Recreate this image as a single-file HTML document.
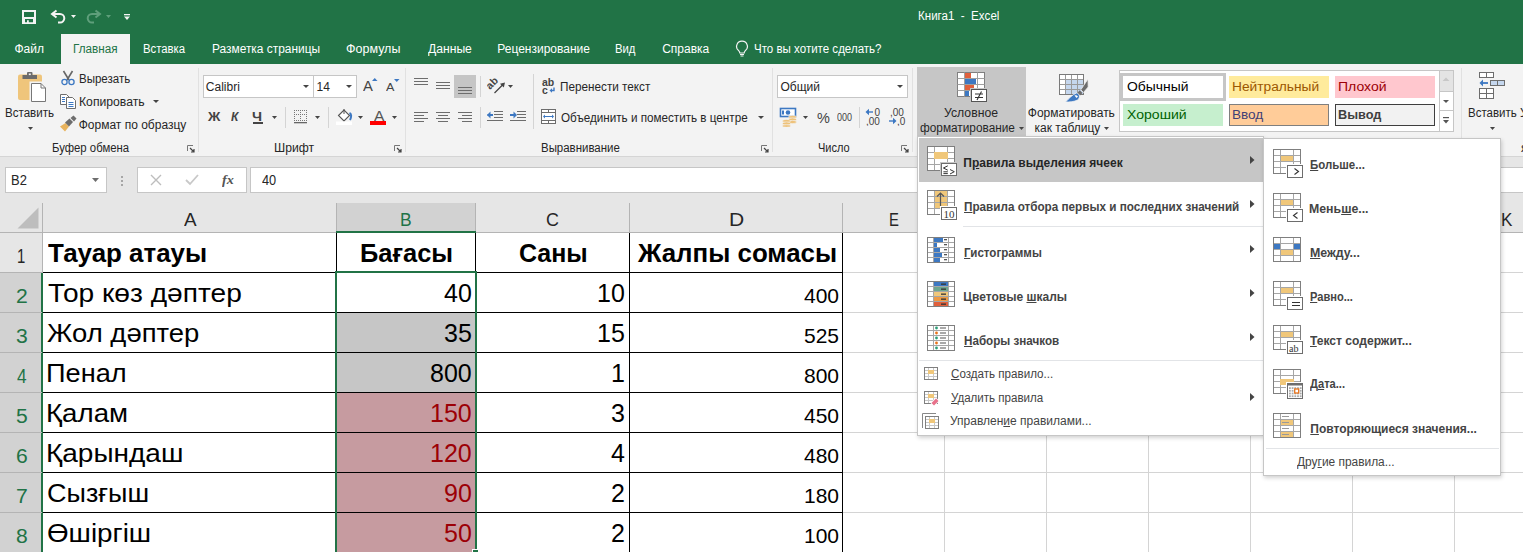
<!DOCTYPE html>
<html><head><meta charset="utf-8"><style>
html,body{margin:0;padding:0;}
body{width:1523px;height:552px;overflow:hidden;position:relative;background:#fff;font-family:'Liberation Sans', sans-serif;}
div,span,svg{position:absolute;}
</style></head><body>
<div style="left:0px;top:0px;width:1523px;height:64px;background:#217346;"></div><div style="left:61px;top:34px;width:69px;height:30px;background:#f3f3f3;"></div><div style="left:0px;top:64px;width:1523px;height:92px;background:#f3f3f3;"></div><div style="left:0px;top:156px;width:1523px;height:1px;background:#d5d5d5;"></div><div style="left:198px;top:68px;width:1px;height:84px;background:#e1e1e1;"></div><div style="left:405px;top:68px;width:1px;height:84px;background:#e1e1e1;"></div><div style="left:772px;top:68px;width:1px;height:84px;background:#e1e1e1;"></div><div style="left:912px;top:68px;width:1px;height:84px;background:#e1e1e1;"></div><div style="left:1461px;top:68px;width:1px;height:84px;background:#e1e1e1;"></div><div style="left:203px;top:75px;width:109px;height:21px;border:1px solid #c6c6c6;background:#ffffff;"></div><div style="left:313px;top:75px;width:42px;height:21px;border:1px solid #c6c6c6;background:#ffffff;"></div><div style="left:285px;top:107px;width:1px;height:21px;background:#d4d4d4;"></div><div style="left:328px;top:107px;width:1px;height:21px;background:#d4d4d4;"></div><div style="left:454px;top:75px;width:22px;height:23px;background:#c5c5c5;"></div><div style="left:480px;top:76px;width:1px;height:21px;background:#d4d4d4;"></div><div style="left:480px;top:107px;width:1px;height:21px;background:#d4d4d4;"></div><div style="left:533px;top:74px;width:1px;height:55px;background:#d4d4d4;"></div><div style="left:777px;top:75px;width:129px;height:21px;border:1px solid #c6c6c6;background:#ffffff;"></div><div style="left:859px;top:107px;width:1px;height:21px;background:#d4d4d4;"></div><div style="left:917px;top:67px;width:109px;height:70px;background:#c6c6c6;"></div><div style="left:1119px;top:70px;width:333px;height:60px;border:1px solid #c6c6c6;background:#ffffff;"></div><div style="left:1120px;top:73px;width:104px;height:26px;border:1px solid #c6c6c6;background:#ffffff;border-width:3px;width:100px;height:22px;"></div><div style="left:1229px;top:76px;width:100px;height:22px;background:#ffeb9c;"></div><div style="left:1335px;top:76px;width:100px;height:22px;background:#ffc7ce;"></div><div style="left:1123px;top:104px;width:100px;height:22px;background:#c6efce;"></div><div style="left:1229px;top:104px;width:98px;height:20px;border:1px solid #7f7f7f;background:#ffcc99;"></div><div style="left:1335px;top:104px;width:98px;height:20px;border:1px solid #3f3f3f;background:#f2f2f2;"></div><div style="left:1439px;top:71px;width:1px;height:60px;background:#c6c6c6;"></div><div style="left:1440px;top:71px;width:13px;height:20px;background:#e4e4e4;"></div><div style="left:1440px;top:91px;width:13px;height:1px;background:#c6c6c6;"></div><div style="left:1440px;top:110px;width:13px;height:1px;background:#c6c6c6;"></div><div style="left:0px;top:157px;width:1523px;height:46px;background:#e6e6e6;"></div><div style="left:5px;top:167px;width:100px;height:24px;border:1px solid #c6c6c6;background:#ffffff;"></div><div style="left:137px;top:167px;width:108px;height:24px;border:1px solid #c6c6c6;background:#ffffff;"></div><div style="left:250px;top:167px;width:1276px;height:24px;border:1px solid #c6c6c6;background:#ffffff;"></div><div style="left:0px;top:233px;width:1523px;height:319px;background:#ffffff;"></div><div style="left:0px;top:203px;width:1523px;height:30px;background:#e6e6e6;"></div><div style="left:336px;top:203px;width:139px;height:30px;background:#d2d2d2;"></div><div style="left:0px;top:232px;width:1523px;height:1px;background:#b4b4b4;"></div><div style="left:42px;top:203px;width:1px;height:30px;background:#b4b4b4;"></div><div style="left:336px;top:203px;width:1px;height:30px;background:#b4b4b4;"></div><div style="left:475px;top:203px;width:1px;height:30px;background:#b4b4b4;"></div><div style="left:629px;top:203px;width:1px;height:30px;background:#b4b4b4;"></div><div style="left:842px;top:203px;width:1px;height:30px;background:#b4b4b4;"></div><div style="left:944px;top:203px;width:1px;height:30px;background:#b4b4b4;"></div><div style="left:1046px;top:203px;width:1px;height:30px;background:#b4b4b4;"></div><div style="left:1148px;top:203px;width:1px;height:30px;background:#b4b4b4;"></div><div style="left:1250px;top:203px;width:1px;height:30px;background:#b4b4b4;"></div><div style="left:1352px;top:203px;width:1px;height:30px;background:#b4b4b4;"></div><div style="left:1454px;top:203px;width:1px;height:30px;background:#b4b4b4;"></div><div style="left:336px;top:231px;width:140px;height:2px;background:#217346;"></div><div style="left:0px;top:233px;width:42px;height:319px;background:#d2d2d2;"></div><div style="left:0px;top:233px;width:42px;height:39px;background:#e6e6e6;"></div><div style="left:42px;top:203px;width:1px;height:70px;background:#b4b4b4;"></div><div style="left:41px;top:273px;width:2px;height:279px;background:#217346;"></div><div style="left:0px;top:272px;width:42px;height:1px;background:#b4b4b4;"></div><div style="left:0px;top:312px;width:42px;height:1px;background:#b4b4b4;"></div><div style="left:0px;top:352px;width:42px;height:1px;background:#b4b4b4;"></div><div style="left:0px;top:392px;width:42px;height:1px;background:#b4b4b4;"></div><div style="left:0px;top:432px;width:42px;height:1px;background:#b4b4b4;"></div><div style="left:0px;top:472px;width:42px;height:1px;background:#b4b4b4;"></div><div style="left:0px;top:512px;width:42px;height:1px;background:#b4b4b4;"></div><div style="left:0px;top:552px;width:42px;height:1px;background:#b4b4b4;"></div><div style="left:842px;top:233px;width:1px;height:319px;background:#d4d4d4;"></div><div style="left:944px;top:233px;width:1px;height:319px;background:#d4d4d4;"></div><div style="left:1046px;top:233px;width:1px;height:319px;background:#d4d4d4;"></div><div style="left:1148px;top:233px;width:1px;height:319px;background:#d4d4d4;"></div><div style="left:1250px;top:233px;width:1px;height:319px;background:#d4d4d4;"></div><div style="left:1352px;top:233px;width:1px;height:319px;background:#d4d4d4;"></div><div style="left:1454px;top:233px;width:1px;height:319px;background:#d4d4d4;"></div><div style="left:1556px;top:233px;width:1px;height:319px;background:#d4d4d4;"></div><div style="left:842px;top:272px;width:681px;height:1px;background:#d4d4d4;"></div><div style="left:842px;top:312px;width:681px;height:1px;background:#d4d4d4;"></div><div style="left:842px;top:352px;width:681px;height:1px;background:#d4d4d4;"></div><div style="left:842px;top:392px;width:681px;height:1px;background:#d4d4d4;"></div><div style="left:842px;top:432px;width:681px;height:1px;background:#d4d4d4;"></div><div style="left:842px;top:472px;width:681px;height:1px;background:#d4d4d4;"></div><div style="left:842px;top:512px;width:681px;height:1px;background:#d4d4d4;"></div><div style="left:842px;top:552px;width:681px;height:1px;background:#d4d4d4;"></div><div style="left:336px;top:313px;width:139px;height:79px;background:#c6c6c6;"></div><div style="left:336px;top:393px;width:139px;height:159px;background:#c69ba0;"></div><div style="left:336px;top:233px;width:1px;height:319px;background:#000000;"></div><div style="left:475px;top:233px;width:1px;height:319px;background:#000000;"></div><div style="left:629px;top:233px;width:1px;height:319px;background:#000000;"></div><div style="left:842px;top:233px;width:1px;height:319px;background:#000000;"></div><div style="left:42px;top:233px;width:1px;height:1px;background:transparent;"></div><div style="left:43px;top:272px;width:800px;height:1px;background:#000000;"></div><div style="left:43px;top:312px;width:800px;height:1px;background:#000000;"></div><div style="left:43px;top:352px;width:800px;height:1px;background:#000000;"></div><div style="left:43px;top:392px;width:800px;height:1px;background:#000000;"></div><div style="left:43px;top:432px;width:800px;height:1px;background:#000000;"></div><div style="left:43px;top:472px;width:800px;height:1px;background:#000000;"></div><div style="left:43px;top:512px;width:800px;height:1px;background:#000000;"></div><div style="left:43px;top:552px;width:800px;height:1px;background:#000000;"></div><div style="left:335px;top:271px;width:142px;height:2px;background:#217346;"></div><div style="left:335px;top:271px;width:2px;height:281px;background:#217346;"></div><div style="left:475px;top:271px;width:2px;height:278px;background:#217346;"></div><div style="left:472px;top:549px;width:7px;height:3px;background:#ffffff;"></div><div style="left:473px;top:550px;width:5px;height:2px;background:#217346;"></div><div style="left:917px;top:136px;width:347px;height:300px;background:#ffffff;box-sizing:border-box;border:1px solid #c6c6c6;box-shadow:1px 2px 4px rgba(0,0,0,0.18);"></div><div style="left:919px;top:138px;width:344px;height:44px;background:#c6c6c6;"></div><div style="left:963px;top:226px;width:300px;height:1px;background:#e2e4e7;"></div><div style="left:919px;top:360px;width:344px;height:1px;background:#e2e4e7;"></div><div style="left:1263px;top:138px;width:238px;height:338px;background:#ffffff;box-sizing:border-box;border:1px solid #c6c6c6;box-shadow:1px 2px 4px rgba(0,0,0,0.18);"></div><div style="left:1266px;top:448px;width:233px;height:1px;background:#e2e4e7;"></div><div style="left:253px;top:122px;width:10px;height:1.5px;background:#444;"></div><div style="left:370px;top:121px;width:16px;height:4px;background:#ff0000;"></div><div style="left:121px;top:176px;width:2px;height:2px;background:#a6a6a6;"></div><div style="left:121px;top:180px;width:2px;height:2px;background:#a6a6a6;"></div><div style="left:121px;top:184px;width:2px;height:2px;background:#a6a6a6;"></div>
<svg style="left:22px;top:10px;" width="14" height="14" viewBox="0 0 14 14"><path fill-rule="evenodd" fill="#f4f4f4" d="M0 0H14V14H0Z M2 2V7H12V2Z M3 9V12.3H5V10.3H6.8V12.3H11V9Z"/></svg><svg style="left:50px;top:9px;" width="18" height="16" viewBox="0 0 18 16"><path d="M6.5 1.5L2 5L6.5 8.5" fill="none" stroke="#f4f4f4" stroke-width="2"/><path d="M2.5 5H10A4.3 4.3 0 0 1 10 13.6H8" fill="none" stroke="#f4f4f4" stroke-width="2"/></svg><svg style="left:71px;top:15px;" width="5" height="3" viewBox="0 0 5 3"><path d="M0 0H5L2.5 3Z" fill="#f4f4f4"/></svg><svg style="left:84px;top:9px;" width="18" height="16" viewBox="0 0 18 16"><path d="M11.5 1.5L16 5L11.5 8.5" fill="none" stroke="#5f9f7b" stroke-width="2"/><path d="M15.5 5H8A4.3 4.3 0 0 0 8 13.6H10" fill="none" stroke="#5f9f7b" stroke-width="2"/></svg><svg style="left:106px;top:15px;" width="5" height="3" viewBox="0 0 5 3"><path d="M0 0H5L2.5 3Z" fill="#5f9f7b"/></svg><svg style="left:124px;top:13px;" width="6" height="8" viewBox="0 0 6 8"><rect x="0" y="1" width="6" height="1.3" fill="#f4f4f4"/><path d="M0 3.5H6L3 7Z" fill="#f4f4f4"/></svg><svg style="left:735px;top:40px;" width="14" height="17" viewBox="0 0 14 17"><path d="M7 1.2A5.3 5.3 0 0 0 3.8 10.8C4.6 11.6 4.8 12.3 4.8 13H9.2C9.2 12.3 9.4 11.6 10.2 10.8A5.3 5.3 0 0 0 7 1.2Z" fill="none" stroke="#f4f4f4" stroke-width="1.2"/><path d="M5 14.5H9M5.5 16H8.5" stroke="#f4f4f4" stroke-width="1.1"/></svg><svg style="left:17px;top:71px;" width="31" height="32" viewBox="0 0 31 32"><rect x="1" y="3.5" width="24" height="25.5" rx="2" fill="#efc57b"/><rect x="5.5" y="4" width="14.5" height="4" fill="#6b6b6b"/><rect x="10" y="1" width="5.5" height="4" rx="1" fill="#6b6b6b"/><rect x="11.8" y="2.5" width="2" height="1.6" fill="#f3f3f3"/><path d="M13.5 11.5H24.5L29.5 16.5V31.5H13.5Z" fill="#ffffff" stroke="#f3f3f3" stroke-width="2"/><path d="M14.5 12.5H24L28.5 17V30.5H14.5Z M24 12.5V17H28.5" fill="#ffffff" stroke="#777" stroke-width="1"/></svg><svg style="left:28px;top:127px;" width="5" height="3" viewBox="0 0 5 3"><path d="M0 0H5L2.5 3Z" fill="#444444"/></svg><svg style="left:60px;top:70px;" width="16" height="16" viewBox="0 0 16 16"><path d="M3.5 1L9 10M12.5 1L7 10" stroke="#666" stroke-width="1.6"/><circle cx="4.5" cy="12" r="2.6" fill="none" stroke="#3d78c2" stroke-width="1.3"/><circle cx="11.5" cy="12" r="2.6" fill="none" stroke="#3d78c2" stroke-width="1.3"/></svg><svg style="left:59px;top:93px;" width="18" height="16" viewBox="0 0 18 16"><path d="M1.5 1.5H7.5L10.5 4.5V11.5H1.5Z" fill="#fff" stroke="#6d6d6d"/><path d="M3 4.5H6M3 6.5H6M3 8.5H6" stroke="#3d78c2"/><path d="M7.5 4.5H13.5L16.5 7.5V15.5H7.5Z" fill="#fff" stroke="#6d6d6d"/><path d="M9.5 9.5H14.5M9.5 11.5H14.5M9.5 13.5H14.5" stroke="#3d78c2"/></svg><svg style="left:153px;top:100px;" width="6" height="3" viewBox="0 0 6 3"><path d="M0 0H6L3.0 3Z" fill="#444444"/></svg><svg style="left:59px;top:115px;" width="19" height="17" viewBox="0 0 19 17"><path d="M1 11.5L6.5 8L10 11.5L6 16.5Z" fill="#e8b35d"/><path d="M6 7.5L10.5 3.5L14 7L10 11.5Z" fill="#6d6d6d"/><path d="M11.5 3L14.5 0.5L17.5 3.5L15 6.5Z" fill="#6d6d6d"/></svg><svg style="left:187px;top:145px;" width="8" height="8" viewBox="0 0 8 8"><path d="M0.5 6V0.5H6" fill="none" stroke="#777"/><path d="M3 3L7 7M7 4V7H4" fill="none" stroke="#444" stroke-width="1.2"/></svg><svg style="left:394px;top:145px;" width="8" height="8" viewBox="0 0 8 8"><path d="M0.5 6V0.5H6" fill="none" stroke="#777"/><path d="M3 3L7 7M7 4V7H4" fill="none" stroke="#444" stroke-width="1.2"/></svg><svg style="left:761px;top:145px;" width="8" height="8" viewBox="0 0 8 8"><path d="M0.5 6V0.5H6" fill="none" stroke="#777"/><path d="M3 3L7 7M7 4V7H4" fill="none" stroke="#444" stroke-width="1.2"/></svg><svg style="left:901px;top:145px;" width="8" height="8" viewBox="0 0 8 8"><path d="M0.5 6V0.5H6" fill="none" stroke="#777"/><path d="M3 3L7 7M7 4V7H4" fill="none" stroke="#444" stroke-width="1.2"/></svg><svg style="left:303px;top:85px;" width="6" height="3" viewBox="0 0 6 3"><path d="M0 0H6L3.0 3Z" fill="#444444"/></svg><svg style="left:346px;top:85px;" width="6" height="3" viewBox="0 0 6 3"><path d="M0 0H6L3.0 3Z" fill="#444444"/></svg><svg style="left:372px;top:78px;" width="6" height="4" viewBox="0 0 6 4"><path d="M0 3H5.5L2.75 0Z" fill="#3d78c2"/></svg><svg style="left:394px;top:79px;" width="6" height="4" viewBox="0 0 6 4"><path d="M0 0H5.5L2.75 3Z" fill="#3d78c2"/></svg><svg style="left:272px;top:116px;" width="5" height="3" viewBox="0 0 5 3"><path d="M0 0H5L2.5 3Z" fill="#444444"/></svg><svg style="left:294px;top:110px;" width="13" height="14" viewBox="0 0 13 14"><rect x="0" y="0" width="1" height="1" fill="#777"/><rect x="2" y="0" width="1" height="1" fill="#777"/><rect x="4" y="0" width="1" height="1" fill="#777"/><rect x="6" y="0" width="1" height="1" fill="#777"/><rect x="8" y="0" width="1" height="1" fill="#777"/><rect x="10" y="0" width="1" height="1" fill="#777"/><rect x="12" y="0" width="1" height="1" fill="#777"/><rect x="0" y="2" width="1" height="1" fill="#777"/><rect x="6" y="2" width="1" height="1" fill="#777"/><rect x="12" y="2" width="1" height="1" fill="#777"/><rect x="0" y="4" width="1" height="1" fill="#777"/><rect x="2" y="4" width="1" height="1" fill="#777"/><rect x="4" y="4" width="1" height="1" fill="#777"/><rect x="6" y="4" width="1" height="1" fill="#777"/><rect x="8" y="4" width="1" height="1" fill="#777"/><rect x="10" y="4" width="1" height="1" fill="#777"/><rect x="12" y="4" width="1" height="1" fill="#777"/><rect x="0" y="6" width="1" height="1" fill="#777"/><rect x="6" y="6" width="1" height="1" fill="#777"/><rect x="12" y="6" width="1" height="1" fill="#777"/><rect x="0" y="8" width="1" height="1" fill="#777"/><rect x="6" y="8" width="1" height="1" fill="#777"/><rect x="12" y="8" width="1" height="1" fill="#777"/><rect x="0" y="10" width="1" height="1" fill="#777"/><rect x="2" y="10" width="1" height="1" fill="#777"/><rect x="4" y="10" width="1" height="1" fill="#777"/><rect x="6" y="10" width="1" height="1" fill="#777"/><rect x="8" y="10" width="1" height="1" fill="#777"/><rect x="10" y="10" width="1" height="1" fill="#777"/><rect x="12" y="10" width="1" height="1" fill="#777"/><rect x="0" y="12" width="13" height="1.3" fill="#666"/></svg><svg style="left:315px;top:116px;" width="5" height="3" viewBox="0 0 5 3"><path d="M0 0H5L2.5 3Z" fill="#444444"/></svg><svg style="left:336px;top:108px;" width="17" height="18" viewBox="0 0 17 18"><path d="M2.5 7.5L8 2L13.5 7.5L8 13Z" fill="#fff" stroke="#555" stroke-width="1.1"/><path d="M8 1V6" stroke="#555"/><path d="M13.5 5Q16.5 6.5 14 12" fill="none" stroke="#3d78c2" stroke-width="2"/><rect x="0" y="13.5" width="16" height="3.5" fill="#ffffff"/></svg><svg style="left:358px;top:116px;" width="5" height="3" viewBox="0 0 5 3"><path d="M0 0H5L2.5 3Z" fill="#444444"/></svg><svg style="left:392px;top:116px;" width="5" height="3" viewBox="0 0 5 3"><path d="M0 0H5L2.5 3Z" fill="#444444"/></svg><svg style="left:414px;top:78px;" width="16" height="14" viewBox="0 0 16 14"><rect x="0" y="0" width="14" height="1" fill="#6d6d6d"/><rect x="0" y="3" width="14" height="1" fill="#6d6d6d"/><rect x="0" y="6" width="14" height="1" fill="#6d6d6d"/></svg><svg style="left:436px;top:82px;" width="16" height="14" viewBox="0 0 16 14"><rect x="0" y="0" width="14" height="1" fill="#6d6d6d"/><rect x="0" y="3" width="14" height="1" fill="#6d6d6d"/><rect x="0" y="6" width="14" height="1" fill="#6d6d6d"/></svg><svg style="left:458px;top:87px;" width="16" height="14" viewBox="0 0 16 14"><rect x="0" y="0" width="14" height="1" fill="#6d6d6d"/><rect x="0" y="3" width="14" height="1" fill="#6d6d6d"/><rect x="0" y="6" width="14" height="1" fill="#6d6d6d"/></svg><svg style="left:414px;top:112px;" width="16" height="14" viewBox="0 0 16 14"><rect x="0" y="0" width="14" height="1" fill="#6d6d6d"/><rect x="0" y="3" width="10" height="1" fill="#6d6d6d"/><rect x="0" y="6" width="14" height="1" fill="#6d6d6d"/><rect x="0" y="9" width="10" height="1" fill="#6d6d6d"/></svg><svg style="left:436px;top:112px;" width="16" height="14" viewBox="0 0 16 14"><rect x="0" y="0" width="14" height="1" fill="#6d6d6d"/><rect x="2" y="3" width="10" height="1" fill="#6d6d6d"/><rect x="0" y="6" width="14" height="1" fill="#6d6d6d"/><rect x="2" y="9" width="10" height="1" fill="#6d6d6d"/></svg><svg style="left:458px;top:112px;" width="16" height="14" viewBox="0 0 16 14"><rect x="0" y="0" width="14" height="1" fill="#6d6d6d"/><rect x="4" y="3" width="10" height="1" fill="#6d6d6d"/><rect x="0" y="6" width="14" height="1" fill="#6d6d6d"/><rect x="4" y="9" width="10" height="1" fill="#6d6d6d"/></svg><svg style="left:487px;top:76px;" width="28" height="20" viewBox="0 0 28 20"><text x="0" y="0" font-family="Liberation Sans" font-weight="bold" font-size="10.5" fill="#444" transform="translate(3,14) rotate(-45)">ab</text><path d="M7.5 17L16.5 8" stroke="#444" stroke-width="1.3"/><path d="M18 6.5L13 7.7L16.8 11.5Z" fill="#444"/></svg><svg style="left:508px;top:85px;" width="5" height="3" viewBox="0 0 5 3"><path d="M0 0H5L2.5 3Z" fill="#444444"/></svg><svg style="left:487px;top:110px;" width="42" height="14" viewBox="0 0 42 14"><path d="M0.5 5H6" stroke="#3d78c2" stroke-width="2"/><path d="M0 5L3.5 1.5V8.5Z" fill="#3d78c2"/><path d="M7 1.5H16M7 4.5H16M7 7.5H16M0 10.5H16" stroke="#6d6d6d"/><path d="M23 5H28.5" stroke="#3d78c2" stroke-width="2"/><path d="M30 5L26.5 1.5V8.5Z" fill="#3d78c2"/><path d="M30 1.5H39M30 4.5H39M30 7.5H39M23 10.5H39" stroke="#6d6d6d"/></svg><svg style="left:541px;top:76px;" width="18" height="18" viewBox="0 0 18 18"><text x="1" y="10" font-family="Liberation Sans" font-weight="bold" font-size="10.5" fill="#444">ab</text><text x="1" y="17.5" font-family="Liberation Sans" font-weight="bold" font-size="10.5" fill="#444">c</text><path d="M13 11.5V14.5H10" fill="none" stroke="#3d78c2" stroke-width="1.4"/><path d="M8.5 14.5L11 12.3V16.7Z" fill="#3d78c2"/></svg><svg style="left:540px;top:108px;" width="17" height="17" viewBox="0 0 17 17"><rect x="1.5" y="1.5" width="14" height="14" fill="#fff" stroke="#6d6d6d"/><path d="M1.5 4.5H15.5M1.5 12.5H15.5M8.5 1.5V4.5M8.5 12.5V15.5" stroke="#6d6d6d"/><path d="M4 8.5H13" stroke="#3d78c2"/><path d="M3 8.5L5 6.5V10.5ZM14 8.5L12 6.5V10.5Z" fill="#3d78c2"/></svg><svg style="left:758px;top:116px;" width="6" height="3" viewBox="0 0 6 3"><path d="M0 0H6L3.0 3Z" fill="#444444"/></svg><svg style="left:897px;top:85px;" width="6" height="3" viewBox="0 0 6 3"><path d="M0 0H6L3.0 3Z" fill="#444444"/></svg><svg style="left:779px;top:107px;" width="19" height="20" viewBox="0 0 19 20"><rect x="1.5" y="1.5" width="15" height="8" fill="#fff" stroke="#3d78c2" stroke-width="1.6"/><circle cx="9" cy="5.5" r="2.3" fill="#3d78c2"/><rect x="3" y="3.5" width="2" height="4" fill="#3d78c2"/><g fill="#eec27a" stroke="#f3f3f3" stroke-width="0.6"><ellipse cx="13.5" cy="10" rx="4" ry="1.6"/><ellipse cx="13.5" cy="12.5" rx="4" ry="1.6"/><ellipse cx="13.5" cy="15" rx="4" ry="1.6"/><ellipse cx="7.5" cy="14" rx="4" ry="1.6"/><ellipse cx="7.5" cy="16.5" rx="4" ry="1.6"/><ellipse cx="7.5" cy="19" rx="4" ry="1.3"/></g></svg><svg style="left:803px;top:116px;" width="5" height="3" viewBox="0 0 5 3"><path d="M0 0H5L2.5 3Z" fill="#444444"/></svg><svg style="left:865px;top:107px;" width="19" height="19" viewBox="0 0 19 19"><path d="M2 5H8" stroke="#3d78c2" stroke-width="1.4"/><path d="M0.5 5L4 1.8V8.2Z" fill="#3d78c2"/><text x="9.5" y="9" font-family="Liberation Sans" font-size="10" fill="#444">0</text><text x="1" y="17.5" font-family="Liberation Sans" font-size="10" fill="#444">,00</text></svg><svg style="left:888px;top:107px;" width="19" height="19" viewBox="0 0 19 19"><text x="2" y="9" font-family="Liberation Sans" font-size="10" fill="#444">,00</text><path d="M1 14H7" stroke="#3d78c2" stroke-width="1.4"/><path d="M8.5 14L5 10.8V17.2Z" fill="#3d78c2"/><text x="9" y="17.5" font-family="Liberation Sans" font-size="10" fill="#444">,0</text></svg><svg style="left:956px;top:71px;" width="32" height="32" viewBox="0 0 32 32"><rect x="1.5" y="1.5" width="27" height="24" fill="#fff" stroke="#808080"/><path d="M8.5 1.5V25.5M21.5 1.5V25.5M1.5 7.5H28.5M1.5 13.5H28.5M1.5 19.5H28.5" stroke="#a0a0a0"/><rect x="9" y="2" width="6" height="5" fill="#e0603c"/><rect x="9" y="8" width="11" height="5" fill="#3d78c2"/><rect x="9" y="14" width="9" height="5" fill="#e0603c"/><rect x="9" y="20" width="4" height="5" fill="#3d78c2"/><rect x="14" y="17" width="18" height="15" fill="#c6c6c6"/><rect x="15.5" y="18.5" width="15" height="12" fill="#fff" stroke="#555"/><path d="M19 23H27M19 26.5H27M21 29L25.5 20.5" stroke="#333" stroke-width="1.1"/></svg><svg style="left:1019px;top:127px;" width="5" height="3" viewBox="0 0 5 3"><path d="M0 0H5L2.5 3Z" fill="#444444"/></svg><svg style="left:1050px;top:68px;" width="45" height="40" viewBox="0 0 45 40"><rect x="10" y="7" width="23" height="19" fill="#fff"/><rect x="16" y="12" width="18" height="15" fill="#c5d7ee"/><path d="M15.5 6.5V26.5M21.5 6.5V26.5M27.5 6.5V26.5M9.5 11.5H33.5M9.5 16.5H33.5M9.5 21.5H33.5" stroke="#9a9a9a"/><rect x="9.5" y="6.5" width="24" height="20" fill="none" stroke="#7a7a7a"/><path d="M38 11L38.2 19L33.5 24.5L30.8 21.8Z" fill="#6d6d6d" stroke="#f3f3f3" stroke-width="0.8"/><path d="M29.8 22.2L32.5 25L30 27.5L27.3 24.8Z" fill="#6d6d6d"/><path d="M26.5 25C30 25.5 30.5 30 27.5 32C24.5 33.8 19.5 34 15.5 34C19 30.5 22.5 26.5 26.5 25Z" fill="#3d78c2" stroke="#f3f3f3" stroke-width="0.8"/><path d="M24.5 27.5Q26.5 26.5 28 28.5L26.5 30Z" fill="#fff"/></svg><svg style="left:1104px;top:127px;" width="5" height="3" viewBox="0 0 5 3"><path d="M0 0H5L2.5 3Z" fill="#444444"/></svg><svg style="left:1442px;top:77px;" width="9" height="5" viewBox="0 0 9 5"><path d="M0.5 4H7.5L4 0.5Z" fill="#c8c8c8"/></svg><svg style="left:1443px;top:100px;" width="6" height="3" viewBox="0 0 6 3"><path d="M0 0H6L3.0 3Z" fill="#555"/></svg><svg style="left:1443px;top:117px;" width="7" height="8" viewBox="0 0 7 8"><rect x="0" y="0" width="6" height="1.2" fill="#555"/><path d="M0 3H6L3 6.5Z" fill="#555"/></svg><svg style="left:1478px;top:71px;" width="28" height="29" viewBox="0 0 28 29"><rect x="1.5" y="1.5" width="14" height="5" fill="#fff" stroke="#6d6d6d"/><path d="M8.5 1.5V6.5" stroke="#6d6d6d"/><rect x="12.5" y="9.5" width="14" height="5" fill="#c5d7ee" stroke="#6d6d6d"/><path d="M19.5 9.5V14.5" stroke="#6d6d6d"/><path d="M3 12H10" stroke="#3d78c2" stroke-width="1.8"/><path d="M1.5 12L5 8.5V15.5Z" fill="#3d78c2"/><rect x="1.5" y="17.5" width="14" height="10" fill="#fff" stroke="#6d6d6d"/><path d="M8.5 17.5V27.5M1.5 22.5H15.5" stroke="#6d6d6d"/></svg><svg style="left:1490px;top:127px;" width="5" height="3" viewBox="0 0 5 3"><path d="M0 0H5L2.5 3Z" fill="#444444"/></svg><svg style="left:92px;top:178px;" width="7" height="4" viewBox="0 0 7 4"><path d="M0 0H7L3.5 4Z" fill="#6d6d6d"/></svg><svg style="left:149px;top:173px;" width="14" height="14" viewBox="0 0 14 14"><path d="M2 2L12 12M12 2L2 12" stroke="#bdbdbd" stroke-width="1.4"/></svg><svg style="left:184px;top:173px;" width="16" height="14" viewBox="0 0 16 14"><path d="M2 7L6 11L14 2" fill="none" stroke="#c8c8c8" stroke-width="1.8"/></svg><svg style="left:17px;top:207px;" width="22" height="22" viewBox="0 0 22 22"><path d="M21.5 0.5V21.5H0.5Z" fill="#bdbdbd"/></svg><svg style="left:927px;top:146px;" width="31" height="31" viewBox="0 0 31 31"><rect x="0" y="0" width="28" height="25" fill="#fff"/><rect x="7" y="0" width="1" height="25" fill="#a6a6a6"/><rect x="20" y="0" width="1" height="25" fill="#a6a6a6"/><rect x="0" y="6" width="28" height="1" fill="#a6a6a6"/><rect x="0" y="12" width="28" height="1" fill="#a6a6a6"/><rect x="0" y="18" width="28" height="1" fill="#a6a6a6"/><rect x="0.5" y="0.5" width="27" height="24" fill="none" stroke="#7f7f7f"/><rect x="7" y="6" width="14" height="7" fill="#f0c77a"/><rect x="13" y="16" width="18" height="15" fill="#c6c6c6"/><rect x="14.5" y="17.5" width="15" height="12" fill="#fff" stroke="#6d6d6d"/><g transform="translate(14,17)"><path d="M6.8 2.8L2.4 5L6.8 7.2M2.4 8.8H6.8M2.4 10.6H6.8M9 6.5L13.3 8.7L9 11" fill="none" stroke="#333" stroke-width="1"/></g></svg><svg style="left:927px;top:190px;" width="31" height="31" viewBox="0 0 31 31"><rect x="0" y="0" width="28" height="25" fill="#fff"/><rect x="7" y="0" width="14" height="19" fill="#f0c77a"/><rect x="7" y="0" width="1" height="25" fill="#a6a6a6"/><rect x="20" y="0" width="1" height="25" fill="#a6a6a6"/><rect x="0" y="6" width="28" height="1" fill="#a6a6a6"/><rect x="0" y="12" width="28" height="1" fill="#a6a6a6"/><rect x="0" y="18" width="28" height="1" fill="#a6a6a6"/><rect x="0.5" y="0.5" width="27" height="24" fill="none" stroke="#7f7f7f"/><path d="M13.5 3V16M10 6.5L13.5 3L17 6.5" fill="none" stroke="#555" stroke-width="1.2"/><rect x="13" y="16" width="18" height="15" fill="#ffffff"/><rect x="14.5" y="17.5" width="15" height="12" fill="#fff" stroke="#6d6d6d"/><text x="16.5" y="28.3" font-family="Liberation Serif" font-size="11" fill="#333">10</text></svg><svg style="left:927px;top:237px;" width="28" height="26" viewBox="0 0 28 26"><rect x="0" y="0" width="28" height="26" fill="#fff"/><rect x="7" y="1" width="9" height="4" fill="#3d78c2"/><rect x="17" y="2" width="3" height="1.3" fill="#555"/><rect x="7" y="6" width="3" height="4" fill="#3d78c2"/><rect x="17" y="7" width="3" height="1.3" fill="#555"/><rect x="7" y="11" width="6" height="4" fill="#3d78c2"/><rect x="17" y="12" width="3" height="1.3" fill="#555"/><rect x="7" y="16" width="8" height="4" fill="#3d78c2"/><rect x="17" y="17" width="3" height="1.3" fill="#555"/><rect x="7" y="21" width="6" height="4" fill="#3d78c2"/><rect x="17" y="22" width="3" height="1.3" fill="#555"/><rect x="6" y="0" width="1" height="26" fill="#a6a6a6"/><rect x="21" y="0" width="1" height="26" fill="#a6a6a6"/><rect x="0" y="5" width="28" height="1" fill="#a6a6a6"/><rect x="0" y="10" width="28" height="1" fill="#a6a6a6"/><rect x="0" y="15" width="28" height="1" fill="#a6a6a6"/><rect x="0" y="20" width="28" height="1" fill="#a6a6a6"/><rect x="0.5" y="0.5" width="27" height="25" fill="none" stroke="#7f7f7f"/></svg><svg style="left:927px;top:281px;" width="28" height="26" viewBox="0 0 28 26"><rect x="0" y="0" width="28" height="26" fill="#fff"/><rect x="7" y="1" width="14" height="4" fill="#3d78c2"/><rect x="14" y="2.5" width="5" height="1.3" fill="#333"/><rect x="7" y="6" width="14" height="4" fill="#6ea68e"/><rect x="14" y="7.5" width="5" height="1.3" fill="#333"/><rect x="7" y="11" width="14" height="4" fill="#f0c77a"/><rect x="14" y="12.5" width="5" height="1.3" fill="#333"/><rect x="7" y="16" width="14" height="4" fill="#ee9a43"/><rect x="14" y="17.5" width="5" height="1.3" fill="#333"/><rect x="7" y="21" width="14" height="4" fill="#e0603c"/><rect x="14" y="22.5" width="5" height="1.3" fill="#333"/><rect x="6" y="0" width="1" height="26" fill="#a6a6a6"/><rect x="21" y="0" width="1" height="26" fill="#a6a6a6"/><rect x="0" y="5" width="28" height="1" fill="#a6a6a6"/><rect x="0" y="10" width="28" height="1" fill="#a6a6a6"/><rect x="0" y="15" width="28" height="1" fill="#a6a6a6"/><rect x="0" y="20" width="28" height="1" fill="#a6a6a6"/><rect x="0.5" y="0.5" width="27" height="25" fill="none" stroke="#7f7f7f"/></svg><svg style="left:927px;top:325px;" width="28" height="26" viewBox="0 0 28 26"><rect x="0" y="0" width="28" height="26" fill="#fff"/><circle cx="9.5" cy="3" r="1.4" fill="#2e9e78"/><rect x="13" y="2.5" width="6" height="1" fill="#555"/><circle cx="9.5" cy="8" r="1.4" fill="#e8741c"/><rect x="13" y="7.5" width="6" height="1" fill="#555"/><circle cx="9.5" cy="13" r="1.4" fill="#2e9e78"/><rect x="13" y="12.5" width="6" height="1" fill="#555"/><circle cx="9.5" cy="18" r="1.4" fill="#e8741c"/><rect x="13" y="17.5" width="6" height="1" fill="#555"/><circle cx="9.5" cy="23" r="1.4" fill="#2e9e78"/><rect x="13" y="22.5" width="6" height="1" fill="#555"/><rect x="6" y="0" width="1" height="26" fill="#a6a6a6"/><rect x="21" y="0" width="1" height="26" fill="#a6a6a6"/><rect x="0" y="5" width="28" height="1" fill="#a6a6a6"/><rect x="0" y="10" width="28" height="1" fill="#a6a6a6"/><rect x="0" y="15" width="28" height="1" fill="#a6a6a6"/><rect x="0" y="20" width="28" height="1" fill="#a6a6a6"/><rect x="0.5" y="0.5" width="27" height="25" fill="none" stroke="#7f7f7f"/></svg><svg style="left:924px;top:367px;" width="14" height="13" viewBox="0 0 14 13"><rect x="0" y="0" width="14" height="13" fill="#fff"/><rect x="0" y="3" width="14" height="1" fill="#c8c8c8"/><rect x="0" y="6" width="14" height="1" fill="#c8c8c8"/><rect x="0" y="9" width="14" height="1" fill="#c8c8c8"/><rect x="4" y="0" width="1" height="13" fill="#c8c8c8"/><rect x="9" y="0" width="1" height="13" fill="#c8c8c8"/><rect x="4" y="3" width="6" height="4" fill="#f0c77a"/><rect x="0.5" y="0.5" width="13" height="12" fill="none" stroke="#7f7f7f"/></svg><svg style="left:924px;top:391px;" width="17" height="15" viewBox="0 0 17 15"><rect x="0" y="0" width="14" height="13" fill="#fff"/><rect x="0" y="3" width="14" height="1" fill="#c8c8c8"/><rect x="0" y="6" width="14" height="1" fill="#c8c8c8"/><rect x="0" y="9" width="14" height="1" fill="#c8c8c8"/><rect x="4" y="0" width="1" height="13" fill="#c8c8c8"/><rect x="9" y="0" width="1" height="13" fill="#c8c8c8"/><rect x="4" y="3" width="6" height="4" fill="#f0c77a"/><rect x="0.5" y="0.5" width="13" height="12" fill="none" stroke="#7f7f7f"/><path d="M6.5 12L12 6.5L15.5 10L10 15.5Z" fill="#fff"/><path d="M7.5 12L12 7.5L14.5 10L10 14.5Z" fill="#e8718a"/></svg><svg style="left:922px;top:413px;" width="18" height="17" viewBox="0 0 18 17"><path d="M0.5 15V0.5H14" fill="none" stroke="#888"/><g transform="translate(3,3)"><rect x="0" y="0" width="14" height="13" fill="#fff"/><rect x="0" y="3" width="14" height="1" fill="#c8c8c8"/><rect x="0" y="6" width="14" height="1" fill="#c8c8c8"/><rect x="0" y="9" width="14" height="1" fill="#c8c8c8"/><rect x="4" y="0" width="1" height="13" fill="#c8c8c8"/><rect x="9" y="0" width="1" height="13" fill="#c8c8c8"/><rect x="4" y="3" width="6" height="4" fill="#f0c77a"/><rect x="0.5" y="0.5" width="13" height="12" fill="none" stroke="#7f7f7f"/></g></svg><svg style="left:1250px;top:156px;" width="5" height="8" viewBox="0 0 5 8"><path d="M0 0L4.5 4L0 8Z" fill="#444"/></svg><svg style="left:1250px;top:200px;" width="5" height="8" viewBox="0 0 5 8"><path d="M0 0L4.5 4L0 8Z" fill="#444"/></svg><svg style="left:1250px;top:245px;" width="5" height="8" viewBox="0 0 5 8"><path d="M0 0L4.5 4L0 8Z" fill="#444"/></svg><svg style="left:1250px;top:289px;" width="5" height="8" viewBox="0 0 5 8"><path d="M0 0L4.5 4L0 8Z" fill="#444"/></svg><svg style="left:1250px;top:333px;" width="5" height="8" viewBox="0 0 5 8"><path d="M0 0L4.5 4L0 8Z" fill="#444"/></svg><svg style="left:1250px;top:393px;" width="5" height="8" viewBox="0 0 5 8"><path d="M0 0L4.5 4L0 8Z" fill="#444"/></svg><svg style="left:1273px;top:149px;" width="31" height="31" viewBox="0 0 31 31"><rect x="0" y="0" width="28" height="25" fill="#fff"/><rect x="7" y="6" width="14" height="7" fill="#f0c77a"/><rect x="7" y="0" width="1" height="25" fill="#a6a6a6"/><rect x="20" y="0" width="1" height="25" fill="#a6a6a6"/><rect x="0" y="6" width="28" height="1" fill="#a6a6a6"/><rect x="0" y="12" width="28" height="1" fill="#a6a6a6"/><rect x="0" y="18" width="28" height="1" fill="#a6a6a6"/><rect x="0.5" y="0.5" width="27" height="24" fill="none" stroke="#7f7f7f"/><rect x="13" y="15" width="18" height="15" fill="#ffffff"/><rect x="14.5" y="16.5" width="15" height="12" fill="#fff" stroke="#6d6d6d"/><path d="M21.5 19.5L25.5 22.5L21.5 25.5" fill="none" stroke="#333" stroke-width="1.1"/></svg><svg style="left:1273px;top:193px;" width="31" height="31" viewBox="0 0 31 31"><rect x="0" y="0" width="28" height="25" fill="#fff"/><rect x="7" y="6" width="14" height="7" fill="#f0c77a"/><rect x="7" y="0" width="1" height="25" fill="#a6a6a6"/><rect x="20" y="0" width="1" height="25" fill="#a6a6a6"/><rect x="0" y="6" width="28" height="1" fill="#a6a6a6"/><rect x="0" y="12" width="28" height="1" fill="#a6a6a6"/><rect x="0" y="18" width="28" height="1" fill="#a6a6a6"/><rect x="0.5" y="0.5" width="27" height="24" fill="none" stroke="#7f7f7f"/><rect x="13" y="15" width="18" height="15" fill="#ffffff"/><rect x="14.5" y="16.5" width="15" height="12" fill="#fff" stroke="#6d6d6d"/><path d="M24.5 19.5L20.5 22.5L24.5 25.5" fill="none" stroke="#333" stroke-width="1.1"/></svg><svg style="left:1273px;top:237px;" width="31" height="31" viewBox="0 0 31 31"><rect x="0" y="0" width="28" height="25" fill="#fff"/><rect x="1" y="7" width="6" height="5" fill="#3d78c2"/><rect x="21" y="7" width="6" height="5" fill="#3d78c2"/><rect x="7" y="13" width="14" height="5" fill="#f0c77a"/><rect x="7" y="0" width="1" height="25" fill="#a6a6a6"/><rect x="20" y="0" width="1" height="25" fill="#a6a6a6"/><rect x="0" y="6" width="28" height="1" fill="#a6a6a6"/><rect x="0" y="12" width="28" height="1" fill="#a6a6a6"/><rect x="0" y="18" width="28" height="1" fill="#a6a6a6"/><rect x="0.5" y="0.5" width="27" height="24" fill="none" stroke="#7f7f7f"/></svg><svg style="left:1273px;top:281px;" width="31" height="31" viewBox="0 0 31 31"><rect x="0" y="0" width="28" height="25" fill="#fff"/><rect x="7" y="6" width="14" height="7" fill="#f0c77a"/><rect x="7" y="0" width="1" height="25" fill="#a6a6a6"/><rect x="20" y="0" width="1" height="25" fill="#a6a6a6"/><rect x="0" y="6" width="28" height="1" fill="#a6a6a6"/><rect x="0" y="12" width="28" height="1" fill="#a6a6a6"/><rect x="0" y="18" width="28" height="1" fill="#a6a6a6"/><rect x="0.5" y="0.5" width="27" height="24" fill="none" stroke="#7f7f7f"/><rect x="13" y="15" width="18" height="15" fill="#ffffff"/><rect x="14.5" y="16.5" width="15" height="12" fill="#fff" stroke="#6d6d6d"/><path d="M19 21.5H27M19 24.5H27" fill="none" stroke="#333" stroke-width="1.1"/></svg><svg style="left:1273px;top:325px;" width="31" height="31" viewBox="0 0 31 31"><rect x="0" y="0" width="28" height="25" fill="#fff"/><rect x="7" y="6" width="14" height="7" fill="#f0c77a"/><rect x="7" y="0" width="1" height="25" fill="#a6a6a6"/><rect x="20" y="0" width="1" height="25" fill="#a6a6a6"/><rect x="0" y="6" width="28" height="1" fill="#a6a6a6"/><rect x="0" y="12" width="28" height="1" fill="#a6a6a6"/><rect x="0" y="18" width="28" height="1" fill="#a6a6a6"/><rect x="0.5" y="0.5" width="27" height="24" fill="none" stroke="#7f7f7f"/><rect x="13" y="15" width="18" height="15" fill="#ffffff"/><rect x="14.5" y="16.5" width="15" height="12" fill="#fff" stroke="#6d6d6d"/><text x="16" y="26.5" font-family="Liberation Serif" font-size="10" fill="#333">ab</text></svg><svg style="left:1273px;top:369px;" width="31" height="31" viewBox="0 0 31 31"><rect x="0" y="0" width="28" height="25" fill="#fff"/><rect x="7" y="0" width="1" height="25" fill="#a6a6a6"/><rect x="20" y="0" width="1" height="25" fill="#a6a6a6"/><rect x="0" y="6" width="28" height="1" fill="#a6a6a6"/><rect x="0" y="12" width="28" height="1" fill="#a6a6a6"/><rect x="0" y="18" width="28" height="1" fill="#a6a6a6"/><rect x="0.5" y="0.5" width="27" height="24" fill="none" stroke="#7f7f7f"/><rect x="7" y="10" width="14" height="3" fill="#f0c77a"/><rect x="7" y="13" width="7" height="3" fill="#f0c77a"/><rect x="13" y="13" width="18" height="18" fill="#fff"/><rect x="14.5" y="14.5" width="15" height="15" fill="#fff" stroke="#6d6d6d"/><rect x="14" y="14" width="16" height="2.5" fill="#6d6d6d"/><rect x="16.0" y="18.2" width="1.8" height="1.8" fill="#aaa"/><rect x="16.0" y="20.9" width="1.8" height="1.8" fill="#aaa"/><rect x="16.0" y="23.6" width="1.8" height="1.8" fill="#aaa"/><rect x="16.0" y="26.3" width="1.8" height="1.8" fill="#aaa"/><rect x="18.7" y="18.2" width="1.8" height="1.8" fill="#aaa"/><rect x="18.7" y="20.9" width="1.8" height="1.8" fill="#aaa"/><rect x="18.7" y="23.6" width="1.8" height="1.8" fill="#aaa"/><rect x="18.7" y="26.3" width="1.8" height="1.8" fill="#aaa"/><rect x="21.4" y="18.2" width="1.8" height="1.8" fill="#aaa"/><rect x="21.4" y="20.9" width="1.8" height="1.8" fill="#aaa"/><rect x="21.4" y="23.6" width="1.8" height="1.8" fill="#aaa"/><rect x="21.4" y="26.3" width="1.8" height="1.8" fill="#aaa"/><rect x="24.1" y="18.2" width="1.8" height="1.8" fill="#aaa"/><rect x="24.1" y="20.9" width="1.8" height="1.8" fill="#aaa"/><rect x="24.1" y="23.6" width="1.8" height="1.8" fill="#aaa"/><rect x="24.1" y="26.3" width="1.8" height="1.8" fill="#aaa"/><rect x="26.8" y="18.2" width="1.8" height="1.8" fill="#aaa"/><rect x="26.8" y="20.9" width="1.8" height="1.8" fill="#aaa"/><rect x="26.8" y="23.6" width="1.8" height="1.8" fill="#aaa"/><rect x="26.8" y="26.3" width="1.8" height="1.8" fill="#aaa"/><rect x="21.7" y="20" width="4" height="4" fill="#fff" stroke="#e8741c" stroke-width="1.3"/></svg><svg style="left:1273px;top:413px;" width="31" height="31" viewBox="0 0 31 31"><rect x="0" y="0" width="28" height="25" fill="#fff"/><rect x="7" y="7" width="14" height="5" fill="#f0c77a"/><rect x="7" y="19" width="14" height="5" fill="#f0c77a"/><rect x="9" y="3" width="7" height="1" fill="#999"/><rect x="9" y="9" width="7" height="1" fill="#999"/><rect x="9" y="15" width="7" height="1" fill="#999"/><rect x="9" y="21" width="7" height="1" fill="#999"/><rect x="7" y="0" width="1" height="25" fill="#a6a6a6"/><rect x="20" y="0" width="1" height="25" fill="#a6a6a6"/><rect x="0" y="6" width="28" height="1" fill="#a6a6a6"/><rect x="0" y="12" width="28" height="1" fill="#a6a6a6"/><rect x="0" y="18" width="28" height="1" fill="#a6a6a6"/><rect x="0.5" y="0.5" width="27" height="24" fill="none" stroke="#7f7f7f"/></svg>
<span style="left:918.34px;top:9.84px;font-family:'Liberation Sans', sans-serif;font-size:12px;font-weight:normal;line-height:1;white-space:pre;color:#ffffff;transform:scaleX(0.9639);transform-origin:0 0;">Книга1  -  Excel</span><span style="left:14.50px;top:42.84px;font-family:'Liberation Sans', sans-serif;font-size:12px;font-weight:normal;line-height:1;white-space:pre;color:#ffffff;">Файл</span><span style="left:72.53px;top:42.84px;font-family:'Liberation Sans', sans-serif;font-size:12px;font-weight:normal;line-height:1;white-space:pre;color:#217346;transform:scaleX(0.9750);transform-origin:0 0;">Главная</span><span style="left:143.26px;top:42.84px;font-family:'Liberation Sans', sans-serif;font-size:12px;font-weight:normal;line-height:1;white-space:pre;color:#ffffff;transform:scaleX(0.9432);transform-origin:0 0;">Вставка</span><span style="left:212.31px;top:42.84px;font-family:'Liberation Sans', sans-serif;font-size:12px;font-weight:normal;line-height:1;white-space:pre;color:#ffffff;transform:scaleX(0.9925);transform-origin:0 0;">Разметка страницы</span><span style="left:346.26px;top:42.84px;font-family:'Liberation Sans', sans-serif;font-size:12px;font-weight:normal;line-height:1;white-space:pre;color:#ffffff;transform:scaleX(1.0412);transform-origin:0 0;">Формулы</span><span style="left:427.80px;top:42.84px;font-family:'Liberation Sans', sans-serif;font-size:12px;font-weight:normal;line-height:1;white-space:pre;color:#ffffff;transform:scaleX(1.0116);transform-origin:0 0;">Данные</span><span style="left:497.30px;top:42.84px;font-family:'Liberation Sans', sans-serif;font-size:12px;font-weight:normal;line-height:1;white-space:pre;color:#ffffff;">Рецензирование</span><span style="left:615.26px;top:42.84px;font-family:'Liberation Sans', sans-serif;font-size:12px;font-weight:normal;line-height:1;white-space:pre;color:#ffffff;transform:scaleX(0.9429);transform-origin:0 0;">Вид</span><span style="left:662.20px;top:42.84px;font-family:'Liberation Sans', sans-serif;font-size:12px;font-weight:normal;line-height:1;white-space:pre;color:#ffffff;">Справка</span><span style="left:754.34px;top:42.84px;font-family:'Liberation Sans', sans-serif;font-size:12px;font-weight:normal;line-height:1;white-space:pre;color:#ffffff;transform:scaleX(0.9611);transform-origin:0 0;">Что вы хотите сделать?</span><span style="left:5.44px;top:106.54px;font-family:'Liberation Sans', sans-serif;font-size:12px;font-weight:normal;line-height:1;white-space:pre;color:#262626;transform:scaleX(0.9633);transform-origin:0 0;">Вставить</span><span style="left:78.74px;top:72.64px;font-family:'Liberation Sans', sans-serif;font-size:12px;font-weight:normal;line-height:1;white-space:pre;color:#262626;transform:scaleX(0.9596);transform-origin:0 0;">Вырезать</span><span style="left:78.68px;top:95.84px;font-family:'Liberation Sans', sans-serif;font-size:12px;font-weight:normal;line-height:1;white-space:pre;color:#262626;transform:scaleX(1.0159);transform-origin:0 0;">Копировать</span><span style="left:78.70px;top:118.84px;font-family:'Liberation Sans', sans-serif;font-size:12px;font-weight:normal;line-height:1;white-space:pre;color:#262626;">Формат по образцу</span><span style="left:51.76px;top:141.64px;font-family:'Liberation Sans', sans-serif;font-size:12px;font-weight:normal;line-height:1;white-space:pre;color:#262626;transform:scaleX(0.9450);transform-origin:0 0;">Буфер обмена</span><span style="left:205.80px;top:80.84px;font-family:'Liberation Sans', sans-serif;font-size:12px;font-weight:normal;line-height:1;white-space:pre;color:#262626;">Calibri</span><span style="left:316.60px;top:80.84px;font-family:'Liberation Sans', sans-serif;font-size:12px;font-weight:normal;line-height:1;white-space:pre;color:#262626;">14</span><span style="left:273.68px;top:141.84px;font-family:'Liberation Sans', sans-serif;font-size:12px;font-weight:normal;line-height:1;white-space:pre;color:#262626;transform:scaleX(1.0158);transform-origin:0 0;">Шрифт</span><span style="left:560.02px;top:80.84px;font-family:'Liberation Sans', sans-serif;font-size:12px;font-weight:normal;line-height:1;white-space:pre;color:#262626;transform:scaleX(0.9780);transform-origin:0 0;">Перенести текст</span><span style="left:561.00px;top:111.84px;font-family:'Liberation Sans', sans-serif;font-size:12px;font-weight:normal;line-height:1;white-space:pre;color:#262626;transform:scaleX(0.9729);transform-origin:0 0;">Объединить и поместить в центре</span><span style="left:540.75px;top:141.84px;font-family:'Liberation Sans', sans-serif;font-size:12px;font-weight:normal;line-height:1;white-space:pre;color:#262626;transform:scaleX(0.9543);transform-origin:0 0;">Выравнивание</span><span style="left:780.50px;top:80.84px;font-family:'Liberation Sans', sans-serif;font-size:12px;font-weight:normal;line-height:1;white-space:pre;color:#262626;">Общий</span><span style="left:817.78px;top:141.84px;font-family:'Liberation Sans', sans-serif;font-size:12px;font-weight:normal;line-height:1;white-space:pre;color:#262626;transform:scaleX(0.9182);transform-origin:0 0;">Число</span><span style="left:943.98px;top:106.64px;font-family:'Liberation Sans', sans-serif;font-size:12px;font-weight:normal;line-height:1;white-space:pre;color:#262626;transform:scaleX(1.0192);transform-origin:0 0;">Условное</span><span style="left:919.80px;top:122.44px;font-family:'Liberation Sans', sans-serif;font-size:12px;font-weight:normal;line-height:1;white-space:pre;color:#262626;transform:scaleX(0.9854);transform-origin:0 0;">форматирование</span><span style="left:1027.80px;top:106.64px;font-family:'Liberation Sans', sans-serif;font-size:12px;font-weight:normal;line-height:1;white-space:pre;color:#262626;">Форматировать</span><span style="left:1034.60px;top:122.44px;font-family:'Liberation Sans', sans-serif;font-size:12px;font-weight:normal;line-height:1;white-space:pre;color:#262626;">как таблицу</span><span style="left:1127.30px;top:80.84px;font-family:'Liberation Sans', sans-serif;font-size:12px;font-weight:normal;line-height:1;white-space:pre;color:#000000;transform:scaleX(1.1577);transform-origin:0 0;">Обычный</span><span style="left:1232.35px;top:80.84px;font-family:'Liberation Sans', sans-serif;font-size:12px;font-weight:normal;line-height:1;white-space:pre;color:#9c5700;transform:scaleX(1.1453);transform-origin:0 0;">Нейтральный</span><span style="left:1338.13px;top:80.84px;font-family:'Liberation Sans', sans-serif;font-size:12px;font-weight:normal;line-height:1;white-space:pre;color:#9c0006;transform:scaleX(1.1675);transform-origin:0 0;">Плохой</span><span style="left:1127.30px;top:108.84px;font-family:'Liberation Sans', sans-serif;font-size:12px;font-weight:normal;line-height:1;white-space:pre;color:#006100;transform:scaleX(1.1700);transform-origin:0 0;">Хороший</span><span style="left:1232.37px;top:108.84px;font-family:'Liberation Sans', sans-serif;font-size:12px;font-weight:normal;line-height:1;white-space:pre;color:#3f3f76;transform:scaleX(1.1296);transform-origin:0 0;">Ввод</span><span style="left:1338.24px;top:108.84px;font-family:'Liberation Sans', sans-serif;font-size:12px;font-weight:bold;line-height:1;white-space:pre;color:#3f3f3f;transform:scaleX(1.0600);transform-origin:0 0;">Вывод</span><span style="left:1467.54px;top:106.54px;font-family:'Liberation Sans', sans-serif;font-size:12px;font-weight:normal;line-height:1;white-space:pre;color:#262626;transform:scaleX(0.9571);transform-origin:0 0;">Вставить</span><span style="left:11.27px;top:173.15px;font-family:'Liberation Sans', sans-serif;font-size:14px;font-weight:normal;line-height:1;white-space:pre;color:#262626;transform:scaleX(0.9250);transform-origin:0 0;">B2</span><span style="left:262.00px;top:173.15px;font-family:'Liberation Sans', sans-serif;font-size:14px;font-weight:normal;line-height:1;white-space:pre;color:#262626;transform:scaleX(0.9133);transform-origin:0 0;">40</span><span style="left:184.20px;top:210.41px;font-family:'Liberation Sans', sans-serif;font-size:19px;font-weight:normal;line-height:1;white-space:pre;color:#262626;transform:scaleX(0.9923);transform-origin:0 0;">A</span><span style="left:400.28px;top:210.41px;font-family:'Liberation Sans', sans-serif;font-size:19px;font-weight:normal;line-height:1;white-space:pre;color:#217346;transform:scaleX(0.9182);transform-origin:0 0;">B</span><span style="left:546.06px;top:210.41px;font-family:'Liberation Sans', sans-serif;font-size:19px;font-weight:normal;line-height:1;white-space:pre;color:#262626;transform:scaleX(0.9417);transform-origin:0 0;">C</span><span style="left:728.89px;top:210.41px;font-family:'Liberation Sans', sans-serif;font-size:19px;font-weight:normal;line-height:1;white-space:pre;color:#262626;transform:scaleX(1.1083);transform-origin:0 0;">D</span><span style="left:889.02px;top:210.41px;font-family:'Liberation Sans', sans-serif;font-size:19px;font-weight:normal;line-height:1;white-space:pre;color:#262626;transform:scaleX(0.7818);transform-origin:0 0;">E</span><span style="left:1500.90px;top:210.41px;font-family:'Liberation Sans', sans-serif;font-size:19px;font-weight:normal;line-height:1;white-space:pre;color:#262626;transform:scaleX(0.9000);transform-origin:0 0;">K</span><span style="left:17.26px;top:245.87px;font-family:'Liberation Sans', sans-serif;font-size:20px;font-weight:normal;line-height:1;white-space:pre;color:#262626;transform:scaleX(0.7444);transform-origin:0 0;">1</span><span style="left:15.54px;top:285.87px;font-family:'Liberation Sans', sans-serif;font-size:20px;font-weight:normal;line-height:1;white-space:pre;color:#217346;transform:scaleX(1.0556);transform-origin:0 0;">2</span><span style="left:15.54px;top:325.87px;font-family:'Liberation Sans', sans-serif;font-size:20px;font-weight:normal;line-height:1;white-space:pre;color:#217346;transform:scaleX(1.0556);transform-origin:0 0;">3</span><span style="left:16.60px;top:365.87px;font-family:'Liberation Sans', sans-serif;font-size:20px;font-weight:normal;line-height:1;white-space:pre;color:#217346;transform:scaleX(0.8636);transform-origin:0 0;">4</span><span style="left:15.54px;top:405.87px;font-family:'Liberation Sans', sans-serif;font-size:20px;font-weight:normal;line-height:1;white-space:pre;color:#217346;transform:scaleX(1.0556);transform-origin:0 0;">5</span><span style="left:15.54px;top:445.87px;font-family:'Liberation Sans', sans-serif;font-size:20px;font-weight:normal;line-height:1;white-space:pre;color:#217346;transform:scaleX(1.0556);transform-origin:0 0;">6</span><span style="left:15.54px;top:485.87px;font-family:'Liberation Sans', sans-serif;font-size:20px;font-weight:normal;line-height:1;white-space:pre;color:#217346;transform:scaleX(1.0556);transform-origin:0 0;">7</span><span style="left:15.54px;top:525.87px;font-family:'Liberation Sans', sans-serif;font-size:20px;font-weight:normal;line-height:1;white-space:pre;color:#217346;transform:scaleX(1.0556);transform-origin:0 0;">8</span><span style="left:47.50px;top:241.33px;font-family:'Liberation Sans', sans-serif;font-size:25px;font-weight:bold;line-height:1;white-space:pre;color:#000;transform:scaleX(1.0362);transform-origin:0 0;">Тауар атауы</span><span style="left:359.56px;top:241.33px;font-family:'Liberation Sans', sans-serif;font-size:25px;font-weight:bold;line-height:1;white-space:pre;color:#000;transform:scaleX(1.0182);transform-origin:0 0;">Бағасы</span><span style="left:519.00px;top:241.33px;font-family:'Liberation Sans', sans-serif;font-size:25px;font-weight:bold;line-height:1;white-space:pre;color:#000;">Саны</span><span style="left:637.90px;top:241.33px;font-family:'Liberation Sans', sans-serif;font-size:25px;font-weight:bold;line-height:1;white-space:pre;color:#000;transform:scaleX(1.0356);transform-origin:0 0;">Жалпы сомасы</span><span style="left:47.80px;top:281.33px;font-family:'Liberation Sans', sans-serif;font-size:25px;font-weight:normal;line-height:1;white-space:pre;color:#000;transform:scaleX(1.1244);transform-origin:0 0;">Тор көз дәптер</span><span style="left:444.00px;top:281.33px;font-family:'Liberation Sans', sans-serif;font-size:25px;font-weight:normal;line-height:1;white-space:pre;color:#000;">40</span><span style="left:597.00px;top:281.33px;font-family:'Liberation Sans', sans-serif;font-size:25px;font-weight:normal;line-height:1;white-space:pre;color:#000;">10</span><span style="left:804.00px;top:284.72px;font-family:'Liberation Sans', sans-serif;font-size:21px;font-weight:normal;line-height:1;white-space:pre;color:#000;">400</span><span style="left:46.70px;top:321.33px;font-family:'Liberation Sans', sans-serif;font-size:25px;font-weight:normal;line-height:1;white-space:pre;color:#000;transform:scaleX(1.0985);transform-origin:0 0;">Жол дәптер</span><span style="left:444.00px;top:321.33px;font-family:'Liberation Sans', sans-serif;font-size:25px;font-weight:normal;line-height:1;white-space:pre;color:#000;">35</span><span style="left:597.00px;top:321.33px;font-family:'Liberation Sans', sans-serif;font-size:25px;font-weight:normal;line-height:1;white-space:pre;color:#000;">15</span><span style="left:804.00px;top:324.72px;font-family:'Liberation Sans', sans-serif;font-size:21px;font-weight:normal;line-height:1;white-space:pre;color:#000;">525</span><span style="left:45.63px;top:361.33px;font-family:'Liberation Sans', sans-serif;font-size:25px;font-weight:normal;line-height:1;white-space:pre;color:#000;transform:scaleX(1.0873);transform-origin:0 0;">Пенал</span><span style="left:430.00px;top:361.33px;font-family:'Liberation Sans', sans-serif;font-size:25px;font-weight:normal;line-height:1;white-space:pre;color:#000;">800</span><span style="left:611.00px;top:361.33px;font-family:'Liberation Sans', sans-serif;font-size:25px;font-weight:normal;line-height:1;white-space:pre;color:#000;">1</span><span style="left:804.00px;top:364.72px;font-family:'Liberation Sans', sans-serif;font-size:21px;font-weight:normal;line-height:1;white-space:pre;color:#000;">800</span><span style="left:45.59px;top:401.33px;font-family:'Liberation Sans', sans-serif;font-size:25px;font-weight:normal;line-height:1;white-space:pre;color:#000;transform:scaleX(1.1070);transform-origin:0 0;">Қалам</span><span style="left:430.00px;top:401.33px;font-family:'Liberation Sans', sans-serif;font-size:25px;font-weight:normal;line-height:1;white-space:pre;color:#9c0006;">150</span><span style="left:611.00px;top:401.33px;font-family:'Liberation Sans', sans-serif;font-size:25px;font-weight:normal;line-height:1;white-space:pre;color:#000;">3</span><span style="left:804.00px;top:404.72px;font-family:'Liberation Sans', sans-serif;font-size:21px;font-weight:normal;line-height:1;white-space:pre;color:#000;">450</span><span style="left:45.56px;top:441.33px;font-family:'Liberation Sans', sans-serif;font-size:25px;font-weight:normal;line-height:1;white-space:pre;color:#000;transform:scaleX(1.1193);transform-origin:0 0;">Қарындаш</span><span style="left:430.00px;top:441.33px;font-family:'Liberation Sans', sans-serif;font-size:25px;font-weight:normal;line-height:1;white-space:pre;color:#9c0006;">120</span><span style="left:611.00px;top:441.33px;font-family:'Liberation Sans', sans-serif;font-size:25px;font-weight:normal;line-height:1;white-space:pre;color:#000;">4</span><span style="left:804.00px;top:444.72px;font-family:'Liberation Sans', sans-serif;font-size:21px;font-weight:normal;line-height:1;white-space:pre;color:#000;">480</span><span style="left:46.72px;top:481.33px;font-family:'Liberation Sans', sans-serif;font-size:25px;font-weight:normal;line-height:1;white-space:pre;color:#000;transform:scaleX(1.0793);transform-origin:0 0;">Сызғыш</span><span style="left:444.00px;top:481.33px;font-family:'Liberation Sans', sans-serif;font-size:25px;font-weight:normal;line-height:1;white-space:pre;color:#9c0006;">90</span><span style="left:611.00px;top:481.33px;font-family:'Liberation Sans', sans-serif;font-size:25px;font-weight:normal;line-height:1;white-space:pre;color:#000;">2</span><span style="left:804.00px;top:484.72px;font-family:'Liberation Sans', sans-serif;font-size:21px;font-weight:normal;line-height:1;white-space:pre;color:#000;">180</span><span style="left:46.69px;top:521.33px;font-family:'Liberation Sans', sans-serif;font-size:25px;font-weight:normal;line-height:1;white-space:pre;color:#000;transform:scaleX(1.1110);transform-origin:0 0;">Өшіргіш</span><span style="left:444.00px;top:521.33px;font-family:'Liberation Sans', sans-serif;font-size:25px;font-weight:normal;line-height:1;white-space:pre;color:#9c0006;">50</span><span style="left:611.00px;top:521.33px;font-family:'Liberation Sans', sans-serif;font-size:25px;font-weight:normal;line-height:1;white-space:pre;color:#000;">2</span><span style="left:804.00px;top:524.72px;font-family:'Liberation Sans', sans-serif;font-size:21px;font-weight:normal;line-height:1;white-space:pre;color:#000;">100</span><span style="left:963.30px;top:156.54px;font-family:'Liberation Sans', sans-serif;font-size:12px;font-weight:bold;line-height:1;white-space:pre;color:#262626;">П<u>р</u>авила выделения ячеек</span><span style="left:964.30px;top:200.54px;font-family:'Liberation Sans', sans-serif;font-size:12px;font-weight:bold;line-height:1;white-space:pre;color:#444444;transform:scaleX(0.9752);transform-origin:0 0;"><u>П</u>равила отбора первых и последних значений</span><span style="left:964.30px;top:246.84px;font-family:'Liberation Sans', sans-serif;font-size:12px;font-weight:bold;line-height:1;white-space:pre;color:#444444;transform:scaleX(0.9650);transform-origin:0 0;"><u>Г</u>истограммы</span><span style="left:963.30px;top:290.74px;font-family:'Liberation Sans', sans-serif;font-size:12px;font-weight:bold;line-height:1;white-space:pre;color:#444444;">Цветовые <u>ш</u>калы</span><span style="left:964.30px;top:335.04px;font-family:'Liberation Sans', sans-serif;font-size:12px;font-weight:bold;line-height:1;white-space:pre;color:#444444;transform:scaleX(0.9704);transform-origin:0 0;"><u>Н</u>аборы значков</span><span style="left:951.00px;top:367.54px;font-family:'Liberation Sans', sans-serif;font-size:12px;font-weight:normal;line-height:1;white-space:pre;color:#444444;transform:scaleX(0.9667);transform-origin:0 0;"><u>С</u>оздать правило...</span><span style="left:951.00px;top:391.54px;font-family:'Liberation Sans', sans-serif;font-size:12px;font-weight:normal;line-height:1;white-space:pre;color:#444444;transform:scaleX(0.9635);transform-origin:0 0;"><u>У</u>далить правила</span><span style="left:950.00px;top:415.34px;font-family:'Liberation Sans', sans-serif;font-size:12px;font-weight:normal;line-height:1;white-space:pre;color:#444444;">Управлен<u>и</u>е правилами...</span><span style="left:1310.30px;top:158.94px;font-family:'Liberation Sans', sans-serif;font-size:12px;font-weight:bold;line-height:1;white-space:pre;color:#444444;transform:scaleX(0.9561);transform-origin:0 0;"><u>Б</u>ольше...</span><span style="left:1309.27px;top:202.84px;font-family:'Liberation Sans', sans-serif;font-size:12px;font-weight:bold;line-height:1;white-space:pre;color:#444444;transform:scaleX(1.0268);transform-origin:0 0;">Мень<u>ш</u>е...</span><span style="left:1310.30px;top:246.84px;font-family:'Liberation Sans', sans-serif;font-size:12px;font-weight:bold;line-height:1;white-space:pre;color:#444444;transform:scaleX(1.0312);transform-origin:0 0;"><u>М</u>ежду...</span><span style="left:1310.30px;top:290.54px;font-family:'Liberation Sans', sans-serif;font-size:12px;font-weight:bold;line-height:1;white-space:pre;color:#444444;transform:scaleX(0.9239);transform-origin:0 0;"><u>Р</u>авно...</span><span style="left:1310.30px;top:334.64px;font-family:'Liberation Sans', sans-serif;font-size:12px;font-weight:bold;line-height:1;white-space:pre;color:#444444;transform:scaleX(1.0060);transform-origin:0 0;"><u>Т</u>екст содержит...</span><span style="left:1310.30px;top:378.14px;font-family:'Liberation Sans', sans-serif;font-size:12px;font-weight:bold;line-height:1;white-space:pre;color:#444444;transform:scaleX(0.9270);transform-origin:0 0;">Д<u>а</u>та...</span><span style="left:1310.30px;top:422.84px;font-family:'Liberation Sans', sans-serif;font-size:12px;font-weight:bold;line-height:1;white-space:pre;color:#444444;"><u>П</u>овторяющиеся значения...</span><span style="left:1297.10px;top:456.34px;font-family:'Liberation Sans', sans-serif;font-size:12px;font-weight:normal;line-height:1;white-space:pre;color:#444444;transform:scaleX(0.9928);transform-origin:0 0;">Дру<u>г</u>ие правила...</span><span style="left:363.00px;top:79.15px;font-family:'Liberation Sans', sans-serif;font-size:14px;font-weight:normal;line-height:1;white-space:pre;color:#444;transform:scaleX(1.0556);transform-origin:0 0;">A</span><span style="left:386.00px;top:81.69px;font-family:'Liberation Sans', sans-serif;font-size:11px;font-weight:normal;line-height:1;white-space:pre;color:#444;transform:scaleX(1.1429);transform-origin:0 0;">A</span><span style="left:207.70px;top:109.99px;font-family:'Liberation Sans', sans-serif;font-size:13px;font-weight:bold;line-height:1;white-space:pre;color:#444;transform:scaleX(1.0500);transform-origin:0 0;">Ж</span><span style="left:231.20px;top:109.99px;font-family:'Liberation Sans', sans-serif;font-size:13px;font-weight:bold;line-height:1;white-space:pre;color:#444;transform:scaleX(0.9222);transform-origin:0 0;font-style:italic;">К</span><span style="left:252.40px;top:109.99px;font-family:'Liberation Sans', sans-serif;font-size:13px;font-weight:bold;line-height:1;white-space:pre;color:#444;transform:scaleX(1.1000);transform-origin:0 0;">Ч</span><span style="left:373.50px;top:109.15px;font-family:'Liberation Sans', sans-serif;font-size:14px;font-weight:normal;line-height:1;white-space:pre;color:#555;transform:scaleX(1.1111);transform-origin:0 0;">A</span><span style="left:816.60px;top:111.15px;font-family:'Liberation Sans', sans-serif;font-size:14px;font-weight:normal;line-height:1;white-space:pre;color:#444;transform:scaleX(1.0333);transform-origin:0 0;">%</span><span style="left:836.60px;top:112.53px;font-family:'Liberation Sans', sans-serif;font-size:10px;font-weight:normal;line-height:1;white-space:pre;color:#444;transform:scaleX(0.9000);transform-origin:0 0;">000</span><span style="left:222.00px;top:172.99px;font-family:'Liberation Sans', sans-serif;font-size:13px;font-weight:bold;line-height:1;white-space:pre;color:#555;transform:scaleX(1.0909);transform-origin:0 0;font-style:italic;font-family:'Liberation Serif',serif;">fx</span><span style="left:1520.00px;top:106.54px;font-family:'Liberation Sans', sans-serif;font-size:12px;font-weight:normal;line-height:1;white-space:pre;color:#262626;">У</span><span style="left:1521.00px;top:141.84px;font-family:'Liberation Sans', sans-serif;font-size:12px;font-weight:normal;line-height:1;white-space:pre;color:#262626;">я</span>
</body></html>
